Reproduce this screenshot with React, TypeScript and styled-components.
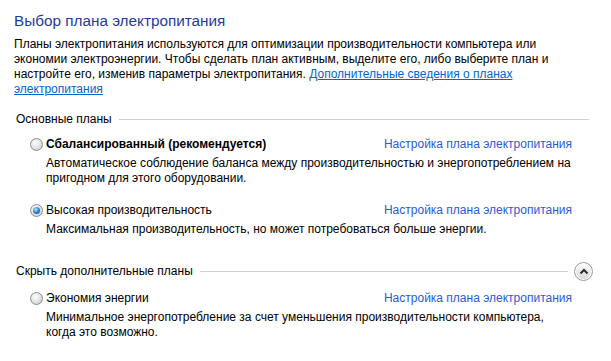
import React from "react";
import styled, { createGlobalStyle } from "styled-components";

const GlobalStyle = createGlobalStyle`
  body {
    margin: 0;
    background: #ffffff;
    font-family: "Liberation Sans", Arial, sans-serif;
    font-size: 12px;
    color: #000000;
  }
`;

const Page = styled.div`
  padding: 10px 22px 0 14px;
  width: 611px;
  box-sizing: border-box;
`;

const Title = styled.h1`
  margin: 0;
  font-size: 15.3px;
  font-weight: normal;
  line-height: 21px;
  color: #1f3c99;
`;

const Intro = styled.p`
  margin: 6px 0 0 0;
  line-height: 15px;
  white-space: nowrap;
`;

const InlineLink = styled.a`
  color: #0066cc;
  text-decoration: underline;
  cursor: pointer;
`;

const SectionHeader = styled.div<{ $top: number }>`
  display: flex;
  align-items: center;
  gap: 7px;
  height: 20px;
  margin-top: ${(p) => p.$top}px;
  padding-left: 2px;
`;

const SectionTitle = styled.span`
  white-space: nowrap;
`;

const Rule = styled.div`
  flex: 1;
  height: 1px;
  background: #d0d0d0;
`;

const CollapseButton = styled.button`
  width: 19px;
  height: 19px;
  margin-left: -1px;
  margin-right: -4px;
  padding: 0;
  border-radius: 50%;
  border: 1px solid #9c9c9c;
  background: linear-gradient(#fefefe, #e9e9e9 50%, #d6d6d6);
  box-shadow: inset 0 0 0 1px #ffffff;
  display: flex;
  align-items: center;
  justify-content: center;
`;

const Plan = styled.div<{ $top: number }>`
  margin-top: ${(p) => p.$top}px;
  padding: 0 17px 0 16px;
`;

const PlanRow = styled.div`
  display: flex;
  align-items: center;
  height: 20px;
`;

const Radio = styled.span<{ $checked?: boolean }>`
  width: 13px;
  height: 13px;
  box-sizing: border-box;
  border-radius: 50%;
  border: 1px solid #8d8d8d;
  background: radial-gradient(circle at 40% 35%, #fdfdfd 0%, #e6e6e6 45%, #c4c4c4 100%);
  display: flex;
  align-items: center;
  justify-content: center;
  margin-right: 3px;

  &::after {
    content: "";
    display: ${(p) => (p.$checked ? "block" : "none")};
    width: 7px;
    height: 7px;
    border-radius: 50%;
    background: radial-gradient(circle at 40% 35%, #bde8ff 0%, #2f8fd8 45%, #0c3f80 100%);
  }
`;

const PlanName = styled.span<{ $bold?: boolean }>`
  font-weight: ${(p) => (p.$bold ? "bold" : "normal")};
`;

const TaskLink = styled.a`
  margin-left: auto;
  color: #2b5bd0;
  text-decoration: none;
  cursor: pointer;
`;

const Description = styled.div`
  margin-top: 2px;
  padding-left: 16px;
  line-height: 15px;
  white-space: nowrap;
`;

const Chevron = () => (
  <svg width="10" height="7" viewBox="0 0 10 7">
    <path d="M1.5 5.5 L5 2 L8.5 5.5" fill="none" stroke="#2b2b2b" strokeWidth="2" />
  </svg>
);

const App = () => {
  return (
    <Page>
      <GlobalStyle />
      <Title>Выбор плана электропитания</Title>
      <Intro>
        Планы электропитания используются для оптимизации производительности компьютера или
        <br />
        экономии электроэнергии. Чтобы сделать план активным, выделите его, либо выберите план и
        <br />
        настройте его, изменив параметры электропитания.{" "}
        <InlineLink>Дополнительные сведения о планах</InlineLink>
        <br />
        <InlineLink>электропитания</InlineLink>
      </Intro>

      <SectionHeader $top={12}>
        <SectionTitle>Основные планы</SectionTitle>
        <Rule />
      </SectionHeader>

      <Plan $top={5}>
        <PlanRow>
          <Radio />
          <PlanName $bold>Сбалансированный (рекомендуется)</PlanName>
          <TaskLink>Настройка плана электропитания</TaskLink>
        </PlanRow>
        <Description>
          Автоматическое соблюдение баланса между производительностью и энергопотреблением на
          <br />
          пригодном для этого оборудовании.
        </Description>
      </Plan>

      <Plan $top={14}>
        <PlanRow>
          <Radio $checked />
          <PlanName>Высокая производительность</PlanName>
          <TaskLink>Настройка плана электропитания</TaskLink>
        </PlanRow>
        <Description>
          Максимальная производительность, но может потребоваться больше энергии.
        </Description>
      </Plan>

      <SectionHeader $top={24}>
        <SectionTitle>Скрыть дополнительные планы</SectionTitle>
        <Rule />
        <CollapseButton aria-label="Скрыть">
          <Chevron />
        </CollapseButton>
      </SectionHeader>

      <Plan $top={7}>
        <PlanRow>
          <Radio />
          <PlanName>Экономия энергии</PlanName>
          <TaskLink>Настройка плана электропитания</TaskLink>
        </PlanRow>
        <Description>
          Минимальное энергопотребление за счет уменьшения производительности компьютера,
          <br />
          когда это возможно.
        </Description>
      </Plan>
    </Page>
  );
};

export default App;
